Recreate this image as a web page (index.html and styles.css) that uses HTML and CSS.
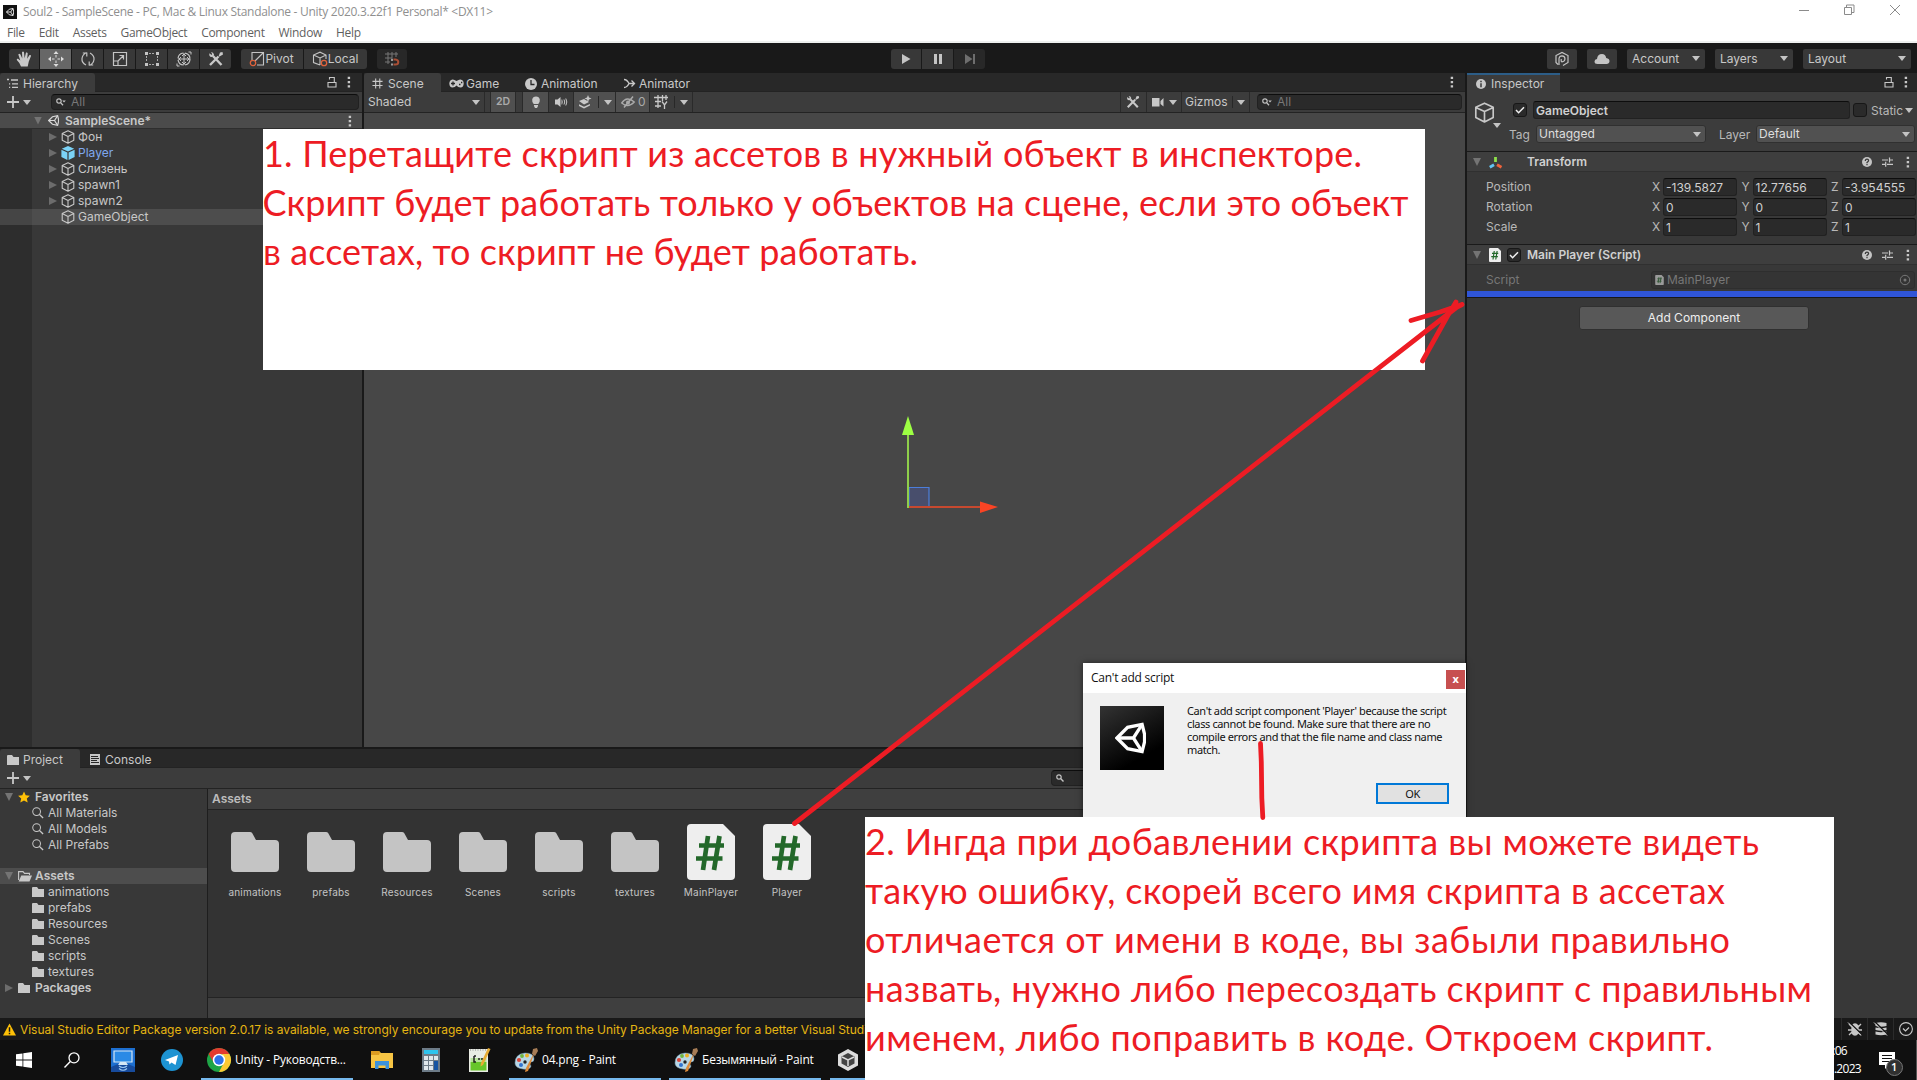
FILE: index.html
```html
<!DOCTYPE html>
<html lang="ru">
<head>
<meta charset="utf-8">
<title>Soul2 - SampleScene - Unity</title>
<link rel="stylesheet" href="styles.css">
</head>
<body>
<svg class="defs" aria-hidden="true">
  <symbol id="cube" viewBox="0 0 14 14"><path d="M7 .8 12.8 3.5V10.3L7 13.3 1.2 10.3V3.5ZM1.2 3.6 7 6.4 12.8 3.6M7 6.4V13.2" fill="none" stroke="currentColor" stroke-width="1.1" stroke-linejoin="round"/></symbol>
  <symbol id="prefab" viewBox="0 0 14 14"><path d="M7 0 13.2 2.7 7 5.6.8 2.7ZM.4 3.7 6.4 6.4V14L.4 11ZM13.6 3.7 7.6 6.4V14L13.6 11Z" fill="#7bd3f7"/></symbol>
  <symbol id="unity" viewBox="0 0 32 32"><path d="M2 16 13 5 28 2 30.500 12V20L28 30 13 27Z" fill="none" stroke="currentColor" stroke-width="3.4"/><path d="M2 16H19L28 2M19 16 28 30" fill="none" stroke="currentColor" stroke-width="3.4"/></symbol>
  <symbol id="dots" viewBox="0 0 4 12"><path d="M.7.700H3.100V3H.7ZM.7 5H3.100V7.300H.7ZM.7 9.300H3.100V11.600H.7Z" fill="currentColor"/></symbol>
  <symbol id="lock" viewBox="0 0 10 12"><path d="M1 6.500H9V11H1ZM2.500 3.500V1.500H7.300V6.500" fill="none" stroke="currentColor" stroke-width="1.100"/></symbol>
  <symbol id="search" viewBox="0 0 10 8"><circle cx="3" cy="3" r="2.200" fill="none" stroke="currentColor" stroke-width="1.200"/><path d="M4.600 4.600 7 7.300" stroke="currentColor" stroke-width="1.300"/><path d="M6.300 2.500H9.800L8 4.500Z" fill="currentColor"/></symbol>
  <symbol id="lens" viewBox="0 0 13 13"><circle cx="5" cy="5" r="4.200" fill="none" stroke="currentColor" stroke-width="1.100"/><path d="M8 8 12 12" stroke="currentColor" stroke-width="1.500"/></symbol>
  <symbol id="plus" viewBox="0 0 12 12"><path d="M0 6H12M6 0V12" stroke="currentColor" stroke-width="1.800"/></symbol>
  <symbol id="folder" viewBox="0 0 48 40"><path d="M4 0H19Q20.500 0 21.300 1.300L25 8H44Q48 8 48 12V36Q48 40 44 40H4Q0 40 0 36V4Q0 0 4 0Z" fill="currentColor"/></symbol>
  <symbol id="smallfolder" viewBox="0 0 12 10"><path d="M1 0H5L6.500 2H12V10H0V1Q0 0 1 0Z" fill="currentColor"/></symbol>
  <symbol id="openfolder" viewBox="0 0 14 11"><path d="M.6 9V.6H5L6.500 2.400H11.500V4" fill="none" stroke="currentColor" stroke-width="1.100"/><path d="M3.300 4.500H14L11.500 10.500H.6Z" fill="currentColor"/></symbol>
  <symbol id="script" viewBox="0 0 48 56"><path d="M4 0H36L48 12V52Q48 56 44 56H4Q0 56 0 52V4Q0 0 4 0Z" fill="#eee"/><path d="M21 12 16 46M32.500 12 27 46M12 21.500H37M9 34.500H35.500" fill="none" stroke="#23682a" stroke-width="4.700"/></symbol>
  <symbol id="tools" viewBox="0 0 16 16"><path d="M2 14 10.500 5.500M5 5 13.500 14" stroke="currentColor" stroke-width="2.400" fill="none"/><path d="M10.500 5.500 12 1.500 14.500 1 15 3.500 11.500 5.500M1.500 2.200Q.5 5.500 3.500 6 6 6 6 3.500 5.500 1 3 1L4.200 3 3.500 4Z" fill="currentColor"/></symbol>
  <symbol id="grid" viewBox="0 0 12 12"><path d="M4 .5V11.500M8.500 .5V11.500M.5 3.700H11.500M.5 8.200H11.500" stroke="currentColor" stroke-width="1.200"/></symbol>
  <symbol id="help" viewBox="0 0 10 10"><circle cx="5" cy="5" r="5" fill="#c4c4c4"/><path d="M3.300 3.900Q3.300 2.200 5 2.200 6.600 2.200 6.600 3.600 6.600 4.500 5 5.400V6.200M5 7V8.200" fill="none" stroke="#383838" stroke-width="1.200"/></symbol>
  <symbol id="preset" viewBox="0 0 11 10"><path d="M0 3H6M8 3H11M7.500 .5V5.500M0 7.300H3M5 7.300H11M3.700 4.700V9.800" stroke="currentColor" stroke-width="1.200"/></symbol>
  <symbol id="check" viewBox="0 0 10 8"><path d="M1 4 3.600 6.700 9 1.200" fill="none" stroke="#eee" stroke-width="1.500"/></symbol>
  <symbol id="paint" viewBox="0 0 24 24"><path d="M1 15Q1 6 11 5 20 5 20 11 20 14 17 14 14 15 17 18 16 22 9 21 1 20 1 15Z" fill="#b9d7e5" stroke="#7ca4bb" stroke-width=".5"/><circle cx="5" cy="12" r="2.100" fill="#d94438"/><circle cx="8" cy="8" r="1.900" fill="#6fb53f"/><circle cx="13" cy="7.500" r="2" fill="#edae22"/><circle cx="7" cy="17" r="2" fill="#3274cf"/><circle cx="11" cy="14" r="1.700" fill="#222"/><path d="M21 3 14 23 11 24 12 20Z" fill="#df8c3a"/><path d="M19 1 23 0 24 3 21 8 18 6Z" fill="#a67c55"/></symbol>
</svg>

<div class="editor">
  <header class="titlebar">
    <span class="applogo"><svg><use href="#unity"/></svg></span>
    <span class="apptitle">Soul2 - SampleScene - PC, Mac &amp; Linux Standalone - Unity 2020.3.22f1 Personal* &lt;DX11&gt;</span>
    <svg class="winbtns" viewBox="0 0 104 12"><path d="M0 6.500H10M45.500 3.500H52.500V10.500H45.500ZM47.500 3V1H55V8.500H53M91 1 101 11M101 1 91 11" fill="none" stroke="#8b8b8b"/></svg>
  </header>
  <nav class="menubar"><span>File</span><span>Edit</span><span>Assets</span><span>GameObject</span><span>Component</span><span>Window</span><span>Help</span></nav>

  <div class="toolbar">
    <div class="group tools">
      <span class="tb first"><svg viewBox="0 0 16 16"><path d="M5 15.500Q4 12 .8 9 .6 7.500 2 7.800L4.300 9.500 2.300 3.500Q3.300 2 4.300 3.300L6.300 7.500 6 1.200Q7 0 8 1.200L8.600 7.200 10 1.600Q11.300 1 11.700 2.300L11.200 7.800 13.500 4Q15 3.500 15 5L12.800 10.500 11.700 15.500Z" fill="#cacaca"/></svg></span>
      <span class="tb on"><svg viewBox="0 0 16 16"><path d="M8 0 10.500 3H5.500ZM8 16 5.500 13H10.500ZM0 8 3 5.500V10.500ZM16 8 13 5.500V10.500ZM7.500 4H8.500V6.500H7.500ZM7.500 9.500H8.500V12H7.500ZM4 7.500H6.500V8.500H4ZM9.500 7.500H12V8.500H9.500Z" fill="#ddd"/></svg></span>
      <span class="tb"><svg viewBox="0 0 16 16"><path d="M6 14Q1.500 11.500 2 7.500 2.500 3.500 6.500 1.500M2.800 2H6.800V5.500M10 2Q14.500 4.500 14 8.500 13.500 12.500 9.500 14.500M13.200 14H9.200V10.500" fill="none" stroke="#c4c4c4" stroke-width="1.200"/></svg></span>
      <span class="tb"><svg viewBox="0 0 16 16"><path d="M1.500 1.500H14.500V14.500H1.500ZM1.500 10H6V14.500M6 10 11.500 4.500M7.500 4.500H11.500V8.500" fill="none" stroke="#c4c4c4" stroke-width="1.200"/></svg></span>
      <span class="tb"><svg viewBox="0 0 16 16"><path d="M1 1H4V4H1ZM12 1H15V4H12ZM1 12H4V15H1ZM12 12H15V15H12Z" fill="#c4c4c4"/><path d="M5 2.500H11M5 13.500H11M2.500 5V11M13.500 5V11" stroke="#aaa" stroke-dasharray="2 1"/></svg></span>
      <span class="tb"><svg viewBox="0 0 16 16"><circle cx="8" cy="8" r="6" fill="none" stroke="#c4c4c4" stroke-width="1.200" stroke-dasharray="8 1.500"/><path d="M8 2V14M2 8H14M6 5 8 3 10 5M6 11 8 13 10 11M5 6 3 8 5 10M11 6 13 8 11 10M12.500 1H15V3.500M3.500 15H1V12.500" fill="none" stroke="#c4c4c4"/></svg></span>
      <span class="tb last"><svg><use href="#tools"/></svg></span>
    </div>
    <div class="group pivots">
      <span class="tb lbl first"><svg viewBox="0 0 16 16"><path d="M3 9V1.500H14.500V14H8M6 10 14 2" fill="none" stroke="#c4c4c4" stroke-width="1.100"/><circle cx="4" cy="12" r="2.700" fill="none" stroke="#e0623c" stroke-width="1.300"/></svg>Pivot</span>
      <span class="tb lbl last"><svg viewBox="0 0 16 16"><path d="M8 14 1.500 11.500V4L8 1.200 14 4V8M1.500 4 8 7 14 4M8 7V14" fill="none" stroke="#c4c4c4" stroke-width="1.100"/><circle cx="12" cy="12" r="2.700" fill="#383838" stroke="#e0623c" stroke-width="1.300"/></svg>Local</span>
    </div>
    <span class="tb snap"><svg viewBox="0 0 16 16"><path d="M4 1V13M8 1V9M12 1V6M1 3H14M1 7H8M1 11H6" fill="none" stroke="#777"/><path d="M9.500 8.500H11.500Q14.300 9 14.300 11 14.300 13.500 11.500 13.500H9.500" fill="none" stroke="#a94f35" stroke-width="2"/><path d="M7 8H9V10H7ZM7 12.500H9V14.500H7Z" fill="#999"/></svg></span>
    <div class="group play">
      <span class="tb first"><svg viewBox="0 0 16 16"><path d="M4 3 12.500 8 4 13Z" fill="#c4c4c4"/></svg></span>
      <span class="tb"><svg viewBox="0 0 16 16"><path d="M4 3H7V13H4ZM9 3H12V13H9Z" fill="#c4c4c4"/></svg></span>
      <span class="tb last off"><svg viewBox="0 0 16 16"><path d="M3 3 10.500 8 3 13ZM11 3H13V13H11Z" fill="#6e6e6e"/></svg></span>
    </div>
    <div class="cloudbar">
      <span class="tb sq"><svg viewBox="0 0 16 16"><path d="M4 13.500 2 11.500V4.500L8 1.500 14 4.500V11.500L9 14.500M5 14V7.500Q5.500 4.800 8 4.800 11 5 11 8 10.500 10.800 8 10.800 7.200 10.800 7.200 10V8" fill="none" stroke="#c4c4c4" stroke-width="1.200"/></svg></span>
      <span class="tb sq"><svg viewBox="0 0 16 16"><path d="M3.500 13Q.5 13 .5 10.500 .5 8.200 3 8 3.500 3 8 3 11.500 3 12.200 7 15.500 7.500 15.500 10.300 15.200 13 12.500 13Z" fill="#c4c4c4"/></svg></span>
      <span class="tb dd">Account<i class="arr"></i></span>
      <span class="tb dd">Layers<i class="arr"></i></span>
      <span class="tb dd wide">Layout<i class="arr"></i></span>
    </div>
  </div>

  <main class="workspace">
    <div class="leftside">
      <div class="upper">
        <section class="hierarchy">
          <div class="tabs"><span class="tab active htab"><svg class="i11" viewBox="0 0 11 10"><path d="M0 1H2M4 1.500H11M2 5.300H3.200M5 5.300H11M2 8.800H3.200M5 8.800H11" stroke="currentColor" stroke-width="1.300"/></svg>Hierarchy</span><svg class="lock"><use href="#lock"/></svg><svg class="dots"><use href="#dots"/></svg></div>
          <div class="bar"><svg class="plus"><use href="#plus"/></svg><i class="arr"></i><div class="searchbox hs"><svg><use href="#search"/></svg>All</div></div>
          <div class="scenerow"><i class="tri open"></i><svg class="ulogo"><use href="#unity"/></svg><b>SampleScene*</b><svg class="dots"><use href="#dots"/></svg></div>
          <div class="tree">
            <div class="node"><i class="tri"></i><svg><use href="#cube"/></svg>Фон</div>
            <div class="node blue"><i class="tri"></i><svg><use href="#prefab"/></svg>Player</div>
            <div class="node"><i class="tri"></i><svg><use href="#cube"/></svg>Слизень</div>
            <div class="node"><i class="tri"></i><svg><use href="#cube"/></svg>spawn1</div>
            <div class="node"><i class="tri"></i><svg><use href="#cube"/></svg>spawn2</div>
            <div class="node sel"><i class="tri none"></i><svg><use href="#cube"/></svg>GameObject</div>
          </div>
        </section>
        <section class="scene">
          <div class="tabs">
            <span class="tab active t1"><svg class="i11"><use href="#grid"/></svg>Scene</span>
            <span class="tab t2"><svg class="pad" viewBox="0 0 15 9"><path d="M3.500 .5Q5 .3 7.500 2 10 .3 11.500 .5 14.700 1 14.700 4.500 14.500 8.500 11.500 8.500 9 8.500 7.500 6.500 6 8.500 3.500 8.500 .5 8.300 .3 4.500 .5 1 3.500 .5Z" fill="currentColor"/><path d="M2 4.500H6M4 2.500V6.500M10 5.500H11.500M12 3.500H13.300" stroke="#282828" stroke-width="1.300"/></svg>Game</span>
            <span class="tab t3"><svg class="i12" viewBox="0 0 12 12"><circle cx="6" cy="6" r="6" fill="currentColor"/><path d="M6 2V6.500H9.500" fill="none" stroke="#282828" stroke-width="1.300"/></svg>Animation</span>
            <span class="tab t4"><svg class="i11" viewBox="0 0 11 10"><path d="M0 1Q3 1 5 5H10M0 9Q3 9 5 5M7.500 2 10.500 5 7.500 8" fill="none" stroke="currentColor" stroke-width="1.300"/></svg>Animator</span>
            <svg class="dots"><use href="#dots"/></svg>
          </div>
          <div class="bar scenebar">
            <span class="cell shaded">Shaded<i class="arr"></i></span>
            <span class="cell lit twod">2D</span>
            <span class="cell lit bulb"><svg viewBox="0 0 14 14"><path d="M4.700 9Q2.800 6.800 3.200 4.500 3.800 1.500 7 1.500 10.200 1.500 10.800 4.500 11.200 6.800 9.300 9ZM5 10H9V11L8 13H6L5 11Z" fill="currentColor"/></svg></span>
            <span class="cell audio"><svg viewBox="0 0 14 14"><path d="M1 4.500H3.500L6.500 2V12L3.500 9.500H1ZM8 4Q9.500 7 8 10L7.500 9V5Z" fill="currentColor"/><path d="M10 4.500Q11.500 7 10 9.500M11.800 3.500Q13.800 7 11.800 10.500" fill="none" stroke="currentColor"/></svg></span>
            <span class="cell lit fx"><svg viewBox="0 0 14 14"><path d="M1 6 6 4 11 7 6 9.500ZM1 9.300 6 11.800 12 9V10.500L6 13.500 1 11ZM10 0 11 2.500 13.500 3.500 11 4.500 10 7 9 4.500 6.500 3.500 9 2.500Z" fill="currentColor"/></svg><em></em><i class="arr"></i></span>
            <span class="cell lit hid"><svg viewBox="0 0 14 14"><path d="M.7 8Q6 .5 13.300 7 7 13.500 .7 8Z" fill="none" stroke="currentColor" stroke-width="1.300"/><circle cx="7" cy="7.500" r="2" fill="currentColor"/><path d="M3 12.500 12 1.500" stroke="currentColor" stroke-width="1.500"/></svg><span>0</span></span>
            <span class="cell gridy"><svg viewBox="0 0 14 14"><path d="M4 0V13M8.500 0V6M12 0V5M0 2.500H14M1 6.500H7M1 11H7M8 6.500 10.500 10 13 6.500M10.500 9.500V14" fill="none" stroke="currentColor" stroke-width="1.300"/></svg><em></em><i class="arr"></i></span>
            <span class="cell stools"><svg><use href="#tools"/></svg></span>
            <span class="cell cam"><svg viewBox="0 0 14 12"><path d="M1 2H8.500V10.500H1ZM9.500 5 12.500 2V10.500L9.500 8Z" fill="currentColor"/></svg><i class="arr"></i></span>
            <span class="cell giz">Gizmos<em></em><i class="arr"></i></span>
            <div class="searchbox ss"><svg><use href="#search"/></svg>All</div>
          </div>
          <div class="viewport">
            <svg class="gizmo" viewBox="0 0 100 96"><path d="M8 72.500H28V92H8Z" fill="#484e6c" stroke="#4c7edb" stroke-width="1.200"/><path d="M7 92H81" stroke="#c7492f" stroke-width="1.800"/><path d="M7 93V19" stroke="#8fcf4a" stroke-width="2"/><path d="M1 20 7 1 13 20Z" fill="#9dff43"/><path d="M79 86.500 97 92 79 98Z" fill="#fa4424"/></svg>
          </div>
        </section>
      </div>
      <section class="project">
        <div class="tabs"><span class="tab active p1"><svg class="i12"><use href="#smallfolder"/></svg>Project</span><span class="tab p2"><svg class="con" viewBox="0 0 10 11"><path d="M0 0H10V11H0Z" fill="currentColor"/><path d="M1 2.500H8M1 4.500H9M1 6.500H7M1 8.500H9" stroke="#282828"/></svg>Console</span></div>
        <div class="bar"><svg class="plus"><use href="#plus"/></svg><i class="arr"></i><div class="searchbox ps"><svg viewBox="0 0 8 8"><circle cx="3" cy="3" r="2.200" fill="none" stroke="currentColor" stroke-width="1.200"/><path d="M4.600 4.600 7.500 7.500" stroke="currentColor" stroke-width="1.400"/></svg></div></div>
        <div class="browser">
          <div class="ptree">
            <div class="prow"><i class="tri open"></i><svg class="star" viewBox="0 0 12 12"><path d="M6 .5 7.700 4.300 11.900 4.700 8.800 7.400 9.700 11.500 6 9.400 2.300 11.500 3.200 7.400 .1 4.700 4.300 4.300Z" fill="#ffc107"/></svg><b>Favorites</b></div>
            <div class="prow sub"><svg><use href="#lens"/></svg>All Materials</div>
            <div class="prow sub"><svg><use href="#lens"/></svg>All Models</div>
            <div class="prow sub"><svg><use href="#lens"/></svg>All Prefabs</div>
            <div class="prow psel"><i class="tri open"></i><svg class="of"><use href="#openfolder"/></svg><b>Assets</b></div>
            <div class="prow sub f"><svg><use href="#smallfolder"/></svg>animations</div>
            <div class="prow sub f"><svg><use href="#smallfolder"/></svg>prefabs</div>
            <div class="prow sub f"><svg><use href="#smallfolder"/></svg>Resources</div>
            <div class="prow sub f"><svg><use href="#smallfolder"/></svg>Scenes</div>
            <div class="prow sub f"><svg><use href="#smallfolder"/></svg>scripts</div>
            <div class="prow sub f"><svg><use href="#smallfolder"/></svg>textures</div>
            <div class="prow"><i class="tri"></i><svg class="pf"><use href="#smallfolder"/></svg><b>Packages</b></div>
          </div>
          <div class="assets">
            <div class="crumb">Assets</div>
            <div class="files">
              <div class="file"><svg><use href="#folder"/></svg><span>animations</span></div>
              <div class="file"><svg><use href="#folder"/></svg><span>prefabs</span></div>
              <div class="file"><svg><use href="#folder"/></svg><span>Resources</span></div>
              <div class="file"><svg><use href="#folder"/></svg><span>Scenes</span></div>
              <div class="file"><svg><use href="#folder"/></svg><span>scripts</span></div>
              <div class="file"><svg><use href="#folder"/></svg><span>textures</span></div>
              <div class="file cs"><svg><use href="#script"/></svg><span>MainPlayer</span></div>
              <div class="file cs"><svg><use href="#script"/></svg><span>Player</span></div>
            </div>
            <div class="foot"></div>
          </div>
        </div>
      </section>
    </div>
    <section class="inspector">
      <div class="tabs"><span class="tab active itab"><svg class="i10" viewBox="0 0 10 10"><circle cx="5" cy="5" r="5" fill="currentColor"/><path d="M5 4.300V8.200M5 1.800V3.200" stroke="#383838" stroke-width="1.500"/></svg>Inspector</span><svg class="lock"><use href="#lock"/></svg><svg class="dots"><use href="#dots"/></svg></div>
      <div class="objhead">
        <div class="bigcube"><svg><use href="#cube"/></svg><i class="arr"></i></div>
        <div class="objrows">
          <div class="objrow"><span class="chk"><svg><use href="#check"/></svg></span><span class="field name">GameObject</span><span class="chk"></span><span class="static">Static</span><i class="arr"></i></div>
          <div class="objrow two"><span class="tag">Tag</span><span class="pop tagpop">Untagged<i class="arr"></i></span><span class="layer">Layer</span><span class="pop laypop">Default<i class="arr"></i></span></div>
        </div>
      </div>
      <div class="comp"><i class="tri open"></i><svg class="axis" viewBox="0 0 13 13"><path d="M6.500 1V6" stroke="#8ee04a" stroke-width="2.800"/><path d="M5 8.700 .8 11.300" stroke="#62c4f2" stroke-width="2.800"/><path d="M8 8.700 12.500 11.300" stroke="#f1633b" stroke-width="2.800"/></svg><b class="tr">Transform</b><svg class="help"><use href="#help"/></svg><svg class="preset"><use href="#preset"/></svg><svg class="dots"><use href="#dots"/></svg></div>
      <div class="props">
        <div class="prop"><span>Position</span><i>X</i><u>-139.5827</u><i>Y</i><u>12.77656</u><i>Z</i><u>-3.954555</u></div>
        <div class="prop"><span>Rotation</span><i>X</i><u>0</u><i>Y</i><u>0</u><i>Z</i><u>0</u></div>
        <div class="prop"><span>Scale</span><i>X</i><u>1</u><i>Y</i><u>1</u><i>Z</i><u>1</u></div>
      </div>
      <div class="comp"><i class="tri open"></i><svg class="sico"><use href="#script"/></svg><span class="chk"><svg><use href="#check"/></svg></span><b>Main Player (Script)</b><svg class="help"><use href="#help"/></svg><svg class="preset"><use href="#preset"/></svg><svg class="dots"><use href="#dots"/></svg></div>
      <div class="scriptrow"><span>Script</span><div class="objfield"><svg class="mini"><use href="#script"/></svg>MainPlayer<svg class="pick" viewBox="0 0 12 12"><circle cx="6" cy="6" r="4.700" fill="none" stroke="currentColor"/><circle cx="6" cy="6" r="1.500" fill="currentColor"/></svg></div></div>
      <div class="dropline"></div>
      <div class="addcomp">Add Component</div>
    </section>
  </main>

  <footer class="status">
    <svg class="warn" viewBox="0 0 14 13"><path d="M7 0 14 13H0Z" fill="#ffc107"/><path d="M7 4V8.800M7 10V11.600" stroke="#191919" stroke-width="1.600"/></svg>
    <span class="msg">Visual Studio Editor Package version 2.0.17 is available, we strongly encourage you to update from the Unity Package Manager for a better Visual Studio experience</span>
    <div class="sticons">
      <span><svg viewBox="0 0 14 14"><path d="M4 4Q7 0 10 4V11Q7 15 4 11ZM1 2 4 5M13 2 10 5M0 8H14M1 13 4 10M13 13 10 10" fill="currentColor" stroke="currentColor" stroke-width="1.300"/><path d="M1 0 14 12.500" stroke="#191919" stroke-width="1.300"/><path d="M0 .5 13 13.500" stroke="currentColor"/></svg></span>
      <span><svg viewBox="0 0 14 14"><path d="M1.500 1Q7-.5 12.500 1V4Q7 5.500 1.500 4ZM1.500 5.500Q7 7 12.500 5.500V8Q7 9.500 1.500 8ZM1.500 9.500Q7 11 12.500 9.500V12.500Q7 14 1.500 12.500Z" fill="currentColor"/><path d="M1 0 14 12.500" stroke="#191919" stroke-width="1.300"/><path d="M0 .5 13 13.500" stroke="currentColor"/></svg></span>
      <span><svg viewBox="0 0 14 14"><circle cx="7" cy="7" r="6.400" fill="none" stroke="currentColor" stroke-width="1.100"/><path d="M4 6.500 6.500 9 10 5.500" fill="none" stroke="currentColor" stroke-width="1.200"/></svg></span>
    </div>
  </footer>

  <div class="taskbar">
    <svg class="k win" viewBox="0 0 16 16"><path d="M0 2.300 6.500 1.400V7.600H0ZM7.300 1.300 16 0V7.600H7.300ZM0 8.400H6.500V14.600L0 13.700ZM7.300 8.400H16V16L7.300 14.700Z" fill="#fff"/></svg>
    <svg class="k find" viewBox="0 0 16 16"><circle cx="10" cy="5.800" r="5" fill="none" stroke="#fff" stroke-width="1.300"/><path d="M6.300 9.500 .5 15.500" stroke="#fff" stroke-width="1.400"/></svg>
    <svg class="k rdp" viewBox="0 0 24 24"><path d="M0 0H24V24H0Z" fill="#1d6fd0"/><path d="M0 24V19Q12 12 24 19V24Z" fill="#174b9c"/><path d="M3 3H21V14H3Z" fill="#2a8ae6" stroke="#d5e7f5" stroke-width="1.200"/><path d="M9 14H15L17 17H7Z" fill="#d5e7f5"/><path d="M8 18Q12 21 16 18M8 20.500Q12 24 16 20.500" fill="none" stroke="#9cc8f3" stroke-width="1.200"/></svg>
    <svg class="k tg" viewBox="0 0 22 22"><circle cx="11" cy="11" r="11" fill="#1d93d2"/><path d="M4 11 17 6 14.500 16 10.500 13.500 8.500 15.500 8 12.500Z" fill="#fff"/></svg>
    <span class="task chrome"><svg viewBox="0 0 24 24"><circle cx="12" cy="12" r="12" fill="#1ea446"/><path d="M1.600 6A12 12 0 0 1 22.400 6H12L7 15Z" fill="#e33b2e"/><path d="M22.400 6A12 12 0 0 1 12 24L17 14.500 15 6Z" fill="#fcc934"/><circle cx="12" cy="12" r="6.200" fill="#fff"/><circle cx="12" cy="12" r="4.700" fill="#2d72e8"/></svg><span>Unity - Руководств...</span></span>
    <svg class="k exp" viewBox="0 0 22 18"><path d="M0 0H8L10 2H22V17H0Z" fill="#f7c544"/><path d="M0 0H8L9 1.500 8 4H0Z" fill="#dc9c21"/><path d="M4 10H18V18H14.500V14.500H7.500V18H4Z" fill="#3b92dc"/></svg>
    <svg class="k calc" viewBox="0 0 18 24"><path d="M0 0H18V24H0Z" fill="#6d7b87"/><path d="M2 2H16V6H2Z" fill="#2ec4ee"/><path d="M2 8H6V12H2ZM7 8H11V12H7ZM12 8H16V12H12ZM2 13H6V17H2ZM7 13H11V17H7ZM2 18H6V22H2ZM7 18H11V22H7Z" fill="#dfe7ec"/><path d="M12 13H16V22H12Z" fill="#1755a3"/></svg>
    <svg class="k npp" viewBox="0 0 22 24"><path d="M0 1H19V24H0Z" fill="#e9ece4"/><path d="M1.500 14H17.500V22.500H1.500Z" fill="#67c62a"/><path d="M1.500 10H17.500V14H1.500Z" fill="#b7e39a"/><path d="M1 2H18" stroke="#888" stroke-dasharray="1 1.500"/><path d="M5 8H7M5 8V14H7M9 11H11M12 11H14" fill="none" stroke="#222" stroke-width="1.500"/><path d="M21.500 1 14 17 11.500 18.500 12 15 19 0Z" fill="#e8ac34"/></svg>
    <span class="task paint1"><svg><use href="#paint"/></svg><span>04.png - Paint</span></span>
    <span class="task paint2"><svg><use href="#paint"/></svg><span>Безымянный - Paint</span></span>
    <span class="task uni"><svg viewBox="0 0 20 22"><path d="M10 0 20 5.500V16.500L10 22 0 16.500V5.500Z" fill="#ddd"/><path d="M10 4 16.500 7.500V14.500L10 18 3.500 14.500V7.500Z" fill="#444"/><path d="M4 8 10 11 16 8M10 11V17" fill="none" stroke="#ddd" stroke-width="1.500"/></svg></span>
    <div class="clock"><span>20:06</span><span>25.01.2023</span></div>
    <div class="notif"><svg viewBox="0 0 25 26"><path d="M1 1H17V14H11L7 18V14H1Z" fill="#fff"/><path d="M4 4.500H14M4 7.500H14M4 10.500H14" stroke="#111" stroke-width="1.200"/><circle cx="16.500" cy="16.500" r="8" fill="#303030" stroke="#777"/></svg><b>1</b></div>
  </div>
</div>

<div class="dialog">
  <div class="dtitle"><span>Can't add script</span><i>x</i></div>
  <div class="dbody">
    <div class="dlogo"><svg><use href="#unity"/></svg></div>
    <p>Can't add script component 'Player' because the script<br>class cannot be found. Make sure that there are no<br>compile errors and that the file name and class name<br>match.</p>
  </div>
  <div class="ok">OK</div>
</div>

<svg class="note note1" viewBox="0 0 1162 241">
  <text x="0" y="38" textLength="1099">1. Перетащите скрипт из ассетов в нужный объект в инспекторе.</text>
  <text x="-.5" y="87" textLength="1146">Скрипт будет работать только у объектов на сцене, если это объект</text>
  <text x="0" y="136" textLength="655">в ассетах, то скрипт не будет работать.</text>
</svg>
<svg class="note note2" viewBox="0 0 969 263">
  <text x="0" y="38" textLength="894">2. Ингда при добавлении скрипта вы можете видеть</text>
  <text x="0" y="87" textLength="860">такую ошибку, скорей всего имя скрипта в ассетах</text>
  <text x="0" y="136" textLength="865">отличается от имени в коде, вы забыли правильно</text>
  <text x="0" y="185" textLength="947">назвать, нужно либо пересоздать скрипт с правильным</text>
  <text x="0" y="234" textLength="848">именем, либо поправить в коде. Откроем скрипт.</text>
</svg>
<svg class="strokes" viewBox="0 0 1917 1080"><path d="M794.500 823.500 1457 307 1462 304.500M1411 320.500 1440 312 1462 304.500M1422.500 361 1447 317 1456 302M1260.500 743.500 1261.300 762 1261.800 798 1262.800 817.500"/></svg>
</body>
</html>
```
FILE: styles.css
```css
* { box-sizing: border-box; }
body { margin: 0; width: 1917px; height: 1080px; overflow: hidden; position: relative; background: #191919; font: 12px/16px Inter, "Noto Sans", sans-serif; color: #c8c8c8; }
svg { display: block; flex: none; overflow: visible; }
i, em { font-style: normal; }
b { font-weight: 600; }
.defs { position: absolute; width: 0; height: 0; }
.editor { display: flex; flex-direction: column; height: 1080px; }

/* window chrome */
.titlebar { height: 24px; background: #fff; display: flex; align-items: center; padding-left: 3px; font: 12px/16px "Open Sans", sans-serif; color: #8f8f8f; }
.applogo { width: 14px; height: 14px; background: #111; display: grid; place-items: center; color: #fff; margin-right: 6px; }
.applogo svg { width: 8px; height: 8px; }
.apptitle { letter-spacing: -.29px; }
.winbtns { width: 104px; height: 12px; margin: -4px 14px 0 auto; }
.menubar { height: 19px; background: #fff; border-bottom: 2px solid #eef0ef; display: flex; gap: 13.900px; padding-left: 7px; font: 12px/17px "Open Sans", sans-serif; letter-spacing: -.3px; color: #5f5f5f; }
.toolbar { height: 30px; background: #191919; display: flex; align-items: center; padding: 1px 6px 0 9px; }
.group { display: flex; gap: 1px; }
.tb { height: 20px; width: 31px; background: #383838; display: flex; align-items: center; justify-content: center; }
.tb svg { width: 16px; height: 16px; }
.first { border-radius: 3px 0 0 3px; }
.last { border-radius: 0 3px 3px 0; }
.tools .first { width: 30px; }
.on { background: #676767; }
.pivots { margin-left: 10px; }
.tb.lbl { width: 62px; padding-right: 1px; }
.pivots .lbl.last { width: 63px; }
.snap { width: 30px; margin-left: 10px; background: #282828; border-radius: 3px; }
.play { margin-left: 484px; }
.play .first { width: 30px; }
.off { background: #282828; }
.cloudbar { display: flex; gap: 10px; margin-left: auto; }
.sq { width: 30px; border-radius: 2px; }
.tb.dd { width: 78px; border-radius: 2px; justify-content: space-between; padding: 0 5px; }
.tb.dd.wide { width: 108px; }
.arr { width: 0; height: 0; border: 4px solid transparent; border-top: 5px solid #c4c4c4; border-bottom: 0; flex: none; }
.tri { width: 8px; height: 8px; flex: none; background: #6c6c6c; clip-path: polygon(0 0, 100% 50%, 0 100%); }
.tri.open { clip-path: polygon(0 0, 100% 0, 50% 100%); background: #747474; }
.tri.none { background: none; }

/* panels */
.workspace { height: 945px; display: flex; gap: 2px; }
.leftside { width: 1465px; display: flex; flex-direction: column; gap: 2px; }
.upper { height: 674px; display: flex; gap: 2px; }
.hierarchy { width: 362px; background: #383838; display: flex; flex-direction: column; }
.scene { width: 1101px; display: flex; flex-direction: column; }
.tabs { height: 19px; background: #282828; border-bottom: 1px solid #232323; display: flex; align-items: center; flex: none; }
.tab { height: 19px; margin-bottom: -1px; display: flex; align-items: center; padding-top: 2px; white-space: nowrap; }
.tab.active { background: #3c3c3c; border-radius: 3px 3px 0 0; }
.htab { width: 95px; padding-left: 7px; gap: 5px; }
.i11 { width: 11px; height: 11px; }
.i12 { width: 12px; height: 12px; }
.i10 { width: 10px; height: 10px; }
.lock { width: 10px; height: 12px; margin-left: auto; }
.dots { width: 4px; height: 12px; }
.hierarchy .tabs .dots { margin: 0 11px 0 10px; }
.bar { height: 21px; background: #3c3c3c; border-bottom: 1px solid #232323; display: flex; align-items: center; flex: none; padding-left: 7px; }
.plus { width: 12px; height: 12px; }
.plus + .arr { margin-left: 4px; }
.searchbox { height: 16px; border: 1px solid #212121; border-top-color: #0d0d0d; border-radius: 4px; background: #2a2a2a; color: #787878; display: flex; align-items: center; gap: 5px; padding-left: 4px; }
.searchbox svg { width: 10px; height: 8px; color: #c4c4c4; }
.hs { width: 308px; margin-left: 20px; }
.scenerow { height: 16px; border-bottom: 1px solid #2e2e2e; background: #4b4b4b; display: flex; align-items: center; padding-left: 34px; flex: none; }
.ulogo { width: 11px; height: 11px; margin: 0 6px 0 6px; color: #d8d8d8; }
.scenerow .dots { margin: 0 10px 0 auto; }
.tree { flex: 1; background: linear-gradient(90deg, #2d2d2d 32px, #383838 32px); }
.node { height: 16px; display: flex; align-items: center; padding-left: 49px; }
.node svg { width: 14px; height: 14px; margin: 0 3px 0 4px; }
.node.blue { color: #7fa8ee; }
.node.sel { background: linear-gradient(90deg, #454545 32px, #4d4d4d 32px); }

.t1 { width: 77px; padding-left: 8px; gap: 5px; }
.t2 { padding-left: 8px; width: 76px; gap: 2px; }
.pad { width: 15px; height: 9px; }
.t3 { padding-left: 8px; width: 99px; gap: 4px; }
.t4 { padding-left: 8px; gap: 4px; }
.scene .dots { margin: 0 11px 0 auto; }
.scenebar { padding: 0; align-items: stretch; height: 21px; line-height: 18px; }
.cell { display: flex; align-items: center; border-right: 1px solid #2a2a2a; }
.cell svg { width: 14px; height: 14px; }
.cell em { width: 1px; height: 12px; background: #282828; }
.lit { background: #505050; }
.shaded { width: 121px; justify-content: space-between; padding: 0 4px; }
.twod { width: 26px; margin-left: 5px; border-left: 1px solid #2a2a2a; justify-content: center; font-size: 10.500px; font-weight: 600; color: #aaa; }
.bulb { width: 27px; margin-left: 6px; border-left: 1px solid #2a2a2a; justify-content: center; }
.audio { width: 25px; justify-content: center; }
.fx { width: 42px; padding-left: 4px; }
.fx em { margin: 0 5px 0 6px; }
.hid { width: 34px; padding-left: 5px; gap: 3px; color: #aaa; }
.gridy { width: 43px; padding-left: 4px; }
.gridy em { margin: 0 5px 0 6px; }
.stools { margin-left: auto; width: 27px; border-left: 1px solid #2a2a2a; justify-content: center; padding-right: 2px; }
.cam { width: 35px; justify-content: space-between; padding: 0 4px 0 4px; }
.giz { width: 68px; padding-left: 3px; }
.giz em { margin: 0 4px 0 4px; }
.ss { width: 205px; margin: 2px 3px 0 7px; }
.viewport { flex: 1; background: #474747; padding: 302px 0 0 537px; }
.gizmo { width: 100px; height: 96px; }

.project { height: 269px; background: #383838; display: flex; flex-direction: column; }
.p1 { width: 80px; padding-left: 7px; gap: 4px; }
.p1 svg { height: 10px; }
.p2 { padding-left: 10px; gap: 5px; }
.con { width: 10px; height: 11px; }
.ps { width: 300px; margin-left: 1020px; }
.ps svg { width: 8px; }
.browser { flex: 1; display: flex; }
.ptree { width: 208px; border-right: 1px solid #1e1e1e; }
.prow { height: 16px; display: flex; align-items: center; padding-left: 5px; }
.star, .of, .pf { width: 12px; height: 12px; margin: 0 5px 0 5px; }
.of { width: 14px; height: 11px; margin-right: 3px; }
.pf { height: 10px; }
.prow.sub { padding-left: 32px; gap: 4px; }
.sub svg { width: 12px; height: 12px; }
.sub.f svg { height: 10px; }
.psel { background: #4d4d4d; margin-top: 15px; }
.assets { flex: 1; display: flex; flex-direction: column; background: #333; }
.crumb { height: 21px; background: #3f3f3f; border-bottom: 1px solid #232323; padding: 2px 4px; font-weight: 600; color: #bcbcbc; }
.files { flex: 1; display: flex; padding-left: 9px; }
.file { width: 76px; padding-top: 22px; display: flex; flex-direction: column; align-items: center; gap: 13px; font-size: 10px; line-height: 14px; color: #c4c4c4; letter-spacing: .2px; }
.file svg { width: 48px; height: 40px; }
.file.cs { padding-top: 14px; gap: 5px; }
.file.cs svg { height: 56px; }
.foot { height: 21px; background: #3f3f3f; border-top: 1px solid #232323; }

/* inspector */
.inspector { width: 450px; background: #383838; }
.itab { width: 93px; padding-left: 9px; gap: 5px; border-top: 2px solid #2c5d87; }
.inspector .tab.itab { border-radius: 0; padding-top: 1px; }
.inspector .tabs .dots { margin: 0 9px 0 10px; }
.objhead { height: 60px; background: #3c3c3c; border-bottom: 1px solid #1a1a1a; display: flex; }
.bigcube { padding: 10px 0 0 7px; width: 46px; }
.bigcube svg { width: 21px; height: 21px; }
.bigcube .arr { display: block; margin: 0 0 0 19px; }
.objrows { flex: 1; padding-top: 9px; }
.objrow { display: flex; align-items: center; height: 18px; }
.objrow .arr { margin-left: 2px; }
.chk { width: 14px; height: 14px; background: #2a2a2a; border: 1px solid #171717; border-radius: 3px; display: grid; place-items: center; flex: none; }
.chk svg { width: 10px; height: 8px; }
.field { height: 18px; background: #2a2a2a; border: 1px solid #212121; border-top-color: #0d0d0d; border-radius: 3px; padding-left: 2px; }
.name { width: 317px; margin: 0 3px 0 6px; font-weight: 600; line-height: 18px; color: #d0d0d0; }
.static { margin-left: 4px; line-height: 18px; padding-top: 1px; color: #b8b8b8; }
.two { margin: 6px 0 0 -4px; color: #b8b8b8; }
.pop { height: 18px; background: #515151; border: 1px solid #303030; border-radius: 3px; display: flex; align-items: center; justify-content: space-between; padding: 0 4px 0 2px; color: #dedede; }
.tag { width: 27px; padding-top: 1px; }
.tagpop { width: 170px; }
.layer { margin-left: 13px; width: 37px; padding-top: 1px; }
.laypop { width: 159px; }
.comp { height: 20px; background: #3e3e3e; border-bottom: 1px solid #303030; display: flex; align-items: center; padding: 1px 0 0 6px; }
.axis { width: 13px; height: 13px; margin-left: 8px; }
.tr { margin-left: 25px; }
.comp b { color: #d0d0d0; }
.comp .help { width: 10px; height: 10px; margin-left: auto; }
.comp .preset { width: 11px; height: 10px; margin: 0 13px 0 10px; }
.comp .dots { margin-right: 7px; }
.props { height: 73px; border-bottom: 1px solid #1a1a1a; padding-top: 6px; color: #b8b8b8; }
.prop { height: 18px; margin-bottom: 2px; display: flex; align-items: center; padding-left: 19px; }
.prop span { width: 166px; flex: none; }
.prop i { width: 11px; flex: none; }
.prop u { width: 74px; flex: none; height: 18px; margin-right: 4.500px; background: #2a2a2a; border: 1px solid #212121; border-top-color: #0d0d0d; border-radius: 3px; padding-left: 2px; text-decoration: none; color: #d0d0d0; line-height: 17px; }
.prop u:last-child { margin-right: 0; }
.sico { width: 12px; height: 14px; margin: 0 6px 0 8px; }
.comp .chk { margin-right: 6px; }
.comp + .scriptrow { height: 26px; }
.scriptrow { display: flex; align-items: center; padding: 3px 0 0 19px; color: #777; }
.scriptrow span { width: 165px; }
.objfield { width: 264px; height: 18px; border: 1px solid #2e2e2e; border-radius: 3px; background: #343434; display: flex; align-items: center; padding: 0 3px; }
.mini { width: 9px; height: 10px; margin-right: 3px; opacity: .55; }
.pick { width: 12px; height: 12px; margin-left: auto; }
.dropline { height: 7px; background: #2f55d8; border-bottom: 1px solid #181818; }
.addcomp { width: 230px; height: 24px; margin: 8px 0 0 112px; background: #585858; border: 1px solid #303030; border-radius: 3px; text-align: center; line-height: 22px; color: #eee; }

/* status and taskbar */
.status { height: 22px; background: #191919; display: flex; align-items: center; padding-left: 3px; }
.warn { width: 13px; height: 13px; }
.msg { width: 1000px; margin: 1px 0 0 4px; overflow: hidden; white-space: nowrap; color: #e6b612; letter-spacing: -.04px; }
.sticons { margin-left: auto; display: flex; }
.sticons span { width: 26px; height: 22px; border-left: 1px solid #2b2b2b; display: grid; place-items: center; }
.sticons span:last-child { width: 24px; }
.sticons svg { width: 14px; height: 14px; }
.taskbar { height: 40px; background: #101010; display: flex; align-items: center; font: 12px/16px "Open Sans", sans-serif; letter-spacing: -.2px; color: #fff; }
.win { width: 16px; height: 16px; margin-left: 16px; }
.find { width: 16px; height: 16px; margin-left: 32px; }
.rdp { width: 24px; height: 24px; margin-left: 31px; }
.tg { width: 22px; height: 22px; margin-left: 26px; }
.task { width: 152px; height: 40px; border-bottom: 2px solid #76b9ed; display: flex; align-items: center; padding: 2px 0 0 6px; gap: 4px; white-space: nowrap; flex: none; }
.task svg { width: 24px; height: 24px; }
.chrome { margin-left: 18px; }
.exp { width: 22px; height: 18px; margin-left: 18px; }
.calc { width: 18px; height: 24px; margin-left: 29px; }
.npp { width: 22px; height: 24px; margin-left: 29px; }
.paint1 { margin-left: 18px; }
.paint2 { margin-left: 8px; }
.paint1, .paint2 { padding-left: 5px; }
.uni { margin-left: 9px; padding-left: 8px; }
.uni svg { width: 20px; height: 22px; }
.clock { margin-left: auto; width: 60px; display: flex; flex-direction: column; align-items: flex-end; gap: 2px; letter-spacing: -.7px; }
.clock span:first-child { padding-right: 14px; }
.notif { width: 39px; height: 40px; margin-left: 17px; border-right: 1px solid #555; position: relative; padding-top: 11px; }
.notif svg { width: 25px; height: 26px; }
.notif b { position: absolute; left: 13px; top: 19px; font-size: 11px; }

/* dialog window */
.dialog { position: absolute; left: 1083px; top: 663px; width: 383px; height: 156px; background: #f0f0f0; color: #111; box-shadow: 0 0 6px rgba(0,0,0,.5); display: flex; flex-direction: column; }
.dtitle { height: 30px; background: #fff; display: flex; justify-content: space-between; padding-left: 8px; font: 12px/30px "Open Sans", sans-serif; letter-spacing: -.25px; }
.dtitle i { width: 19px; height: 19px; margin: 7px 1px 0 0; background: #c75050; color: #fff; text-align: center; font: bold 11px/17px "Open Sans", sans-serif; }
.dbody { display: flex; padding: 13px 0 0 17px; }
.dlogo { width: 64px; height: 64px; background: linear-gradient(150deg, #333, #000 75%); color: #fff; padding: 16px 0 0 15px; }
.dlogo svg { width: 31px; height: 32px; }
.dbody p { margin: -2px 0 0 23px; font: 11px/13px "Noto Sans", sans-serif; letter-spacing: -.38px; white-space: nowrap; }
.ok { width: 73px; height: 21px; margin: 13px 0 0 293px; border: 2px solid #0078d7; background: #e1e1e1; text-align: center; font: 11px/17px "Noto Sans", sans-serif; letter-spacing: -.5px; }

/* annotations drawn over the editor */
.note { position: absolute; background: #fff; font: 36px Lato, "Open Sans", sans-serif; fill: #ed1c24; }
.note1 { left: 263px; top: 129px; width: 1162px; height: 241px; }
.note2 { left: 865px; top: 817px; width: 969px; height: 263px; }
.strokes { position: absolute; left: 0; top: 0; width: 1917px; height: 1080px; fill: none; stroke: #ed1c24; stroke-width: 4.800px; stroke-linecap: round; stroke-linejoin: round; }
```
